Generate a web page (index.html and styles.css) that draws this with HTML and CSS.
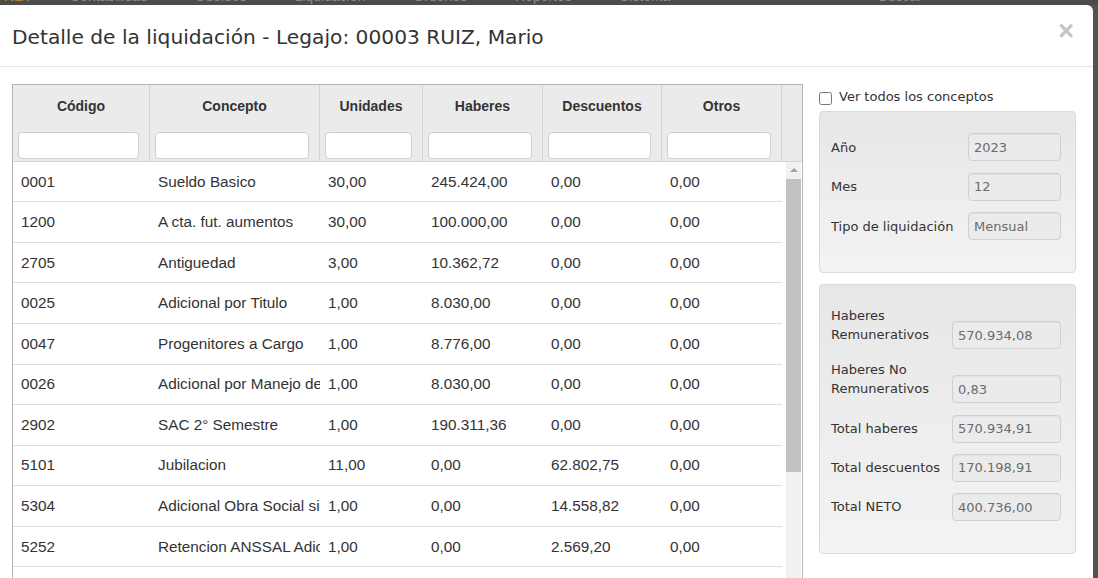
FILE: index.html
```html
<!DOCTYPE html>
<html lang="es">
<head>
    <meta charset="UTF-8">
    <title>Detalle de la liquidación</title>
    <link rel="stylesheet" href="styles.css">
</head>
<body>

<!-- Page behind the modal (only the bottom edge shows) -->
<div class="page-nav">
    <div class="page-nav-inner">
        <span class="brand">NET</span>
        <span>Contabilidad</span>
        <span>Sueldos</span>
        <span>Liquidación</span>
        <span>Ordenes</span>
        <span>Reportes</span>
        <span>Sistema</span>
        <span class="nav-right">Buscar</span>
    </div>
</div>

<div class="modal">
    <div class="modal-header">
        <h4 class="modal-title">Detalle de la liquidación - Legajo: 00003 RUIZ, Mario</h4>
        <button class="close" type="button">&times;</button>
    </div>

    <div class="modal-body">
        <!-- Conceptos grid -->
        <div class="grid">
            <div class="grid-head">
                <div class="hcell c1"><div class="htitle">Código</div><div class="hfilter"><input type="text"></div></div>
                <div class="hcell c2"><div class="htitle">Concepto</div><div class="hfilter"><input type="text"></div></div>
                <div class="hcell c3"><div class="htitle">Unidades</div><div class="hfilter"><input type="text"></div></div>
                <div class="hcell c4"><div class="htitle">Haberes</div><div class="hfilter"><input type="text"></div></div>
                <div class="hcell c5"><div class="htitle">Descuentos</div><div class="hfilter"><input type="text"></div></div>
                <div class="hcell c6"><div class="htitle">Otros</div><div class="hfilter"><input type="text"></div></div>
                <div class="hcell spacer"></div>
            </div>

            <div class="grid-main">
                <div class="rows">
                    <div class="row">
                        <div class="cell c1">0001</div><div class="cell c2">Sueldo Basico</div><div class="cell c3">30,00</div>
                        <div class="cell c4">245.424,00</div><div class="cell c5">0,00</div><div class="cell c6">0,00</div>
                    </div>
                    <div class="row">
                        <div class="cell c1">1200</div><div class="cell c2">A cta. fut. aumentos</div><div class="cell c3">30,00</div>
                        <div class="cell c4">100.000,00</div><div class="cell c5">0,00</div><div class="cell c6">0,00</div>
                    </div>
                    <div class="row">
                        <div class="cell c1">2705</div><div class="cell c2">Antiguedad</div><div class="cell c3">3,00</div>
                        <div class="cell c4">10.362,72</div><div class="cell c5">0,00</div><div class="cell c6">0,00</div>
                    </div>
                    <div class="row">
                        <div class="cell c1">0025</div><div class="cell c2">Adicional por Titulo</div><div class="cell c3">1,00</div>
                        <div class="cell c4">8.030,00</div><div class="cell c5">0,00</div><div class="cell c6">0,00</div>
                    </div>
                    <div class="row">
                        <div class="cell c1">0047</div><div class="cell c2">Progenitores a Cargo</div><div class="cell c3">1,00</div>
                        <div class="cell c4">8.776,00</div><div class="cell c5">0,00</div><div class="cell c6">0,00</div>
                    </div>
                    <div class="row">
                        <div class="cell c1">0026</div><div class="cell c2">Adicional por Manejo de Fondos</div><div class="cell c3">1,00</div>
                        <div class="cell c4">8.030,00</div><div class="cell c5">0,00</div><div class="cell c6">0,00</div>
                    </div>
                    <div class="row">
                        <div class="cell c1">2902</div><div class="cell c2">SAC 2° Semestre</div><div class="cell c3">1,00</div>
                        <div class="cell c4">190.311,36</div><div class="cell c5">0,00</div><div class="cell c6">0,00</div>
                    </div>
                    <div class="row">
                        <div class="cell c1">5101</div><div class="cell c2">Jubilacion</div><div class="cell c3">11,00</div>
                        <div class="cell c4">0,00</div><div class="cell c5">62.802,75</div><div class="cell c6">0,00</div>
                    </div>
                    <div class="row">
                        <div class="cell c1">5304</div><div class="cell c2">Adicional Obra Social sin cargo</div><div class="cell c3">1,00</div>
                        <div class="cell c4">0,00</div><div class="cell c5">14.558,82</div><div class="cell c6">0,00</div>
                    </div>
                    <div class="row">
                        <div class="cell c1">5252</div><div class="cell c2">Retencion ANSSAL Adicional</div><div class="cell c3">1,00</div>
                        <div class="cell c4">0,00</div><div class="cell c5">2.569,20</div><div class="cell c6">0,00</div>
                    </div>
                    <div class="row">
                        <div class="cell c1">5300</div><div class="cell c2">Obra Social</div><div class="cell c3">3,00</div>
                        <div class="cell c4">0,00</div><div class="cell c5">17.128,26</div><div class="cell c6">0,00</div>
                    </div>
                </div>
                <div class="vscroll">
                    <div class="vscroll-track">
                        <div class="vscroll-arrow"></div>
                        <div class="vscroll-thumb"></div>
                    </div>
                </div>
            </div>
        </div>

        <!-- Resumen -->
        <div class="side">
            <label class="check-row">
                <input type="checkbox" class="check">
                <span>Ver todos los conceptos</span>
            </label>

            <div class="panel panel-periodo">
                <div class="field">
                    <span class="field-label">Año</span>
                    <input class="field-input" type="text" value="2023" readonly>
                </div>
                <div class="field">
                    <span class="field-label">Mes</span>
                    <input class="field-input" type="text" value="12" readonly>
                </div>
                <div class="field">
                    <span class="field-label">Tipo de liquidación</span>
                    <input class="field-input" type="text" value="Mensual" readonly>
                </div>
            </div>

            <div class="panel panel-totales">
                <div class="field">
                    <span class="field-label">Haberes Remunerativos</span>
                    <input class="field-input" type="text" value="570.934,08" readonly>
                </div>
                <div class="field">
                    <span class="field-label">Haberes No Remunerativos</span>
                    <input class="field-input" type="text" value="0,83" readonly>
                </div>
                <div class="field">
                    <span class="field-label">Total haberes</span>
                    <input class="field-input" type="text" value="570.934,91" readonly>
                </div>
                <div class="field">
                    <span class="field-label">Total descuentos</span>
                    <input class="field-input" type="text" value="170.198,91" readonly>
                </div>
                <div class="field">
                    <span class="field-label">Total NETO</span>
                    <input class="field-input" type="text" value="400.736,00" readonly>
                </div>
            </div>
        </div>
    </div>
</div>

</body>
</html>
```

FILE: styles.css
```css
/* Base */
html, body {
    height: 100%;
}

body {
    margin: 0;
    overflow: hidden;
    background: #535353;
    font-family: 'DejaVu Sans', Verdana, sans-serif;
    color: #333;
}

/* Page behind the backdrop */
.page-nav {
    height: 5px;
    overflow: hidden;
    background: #4b4b4b;
}

.page-nav-inner {
    display: flex;
    gap: 48px;
    margin-top: -11px;
    padding-left: 4px;
    font-family: 'Liberation Sans', Arial, sans-serif;
    font-size: 14px;
    line-height: 15px;
    color: #8c8c8c;
}

.page-nav-inner .brand {
    color: #b07a3a;
    font-weight: bold;
    margin-right: -10px;
}

.page-nav-inner .nav-right {
    margin-left: 160px;
}

/* Modal */
.modal {
    width: 1093px;
    height: calc(100% - 5px);
    background: #fff;
    border-radius: 0 6px 0 0;
    box-sizing: border-box;
}

.modal-header {
    display: flex;
    align-items: center;
    height: 62px;
    padding: 2px 12px 0 12px;
    box-sizing: border-box;
    border-bottom: 1px solid #e5e5e5;
}

.modal-title {
    margin: 0;
    font-size: 20.2px;
    font-weight: normal;
    color: #333;
}

.close {
    margin-left: auto;
    margin-right: 7px;
    margin-top: -11px;
    padding: 0;
    border: 0;
    background: none;
    font-family: 'Liberation Sans', Arial, sans-serif;
    font-size: 27px;
    font-weight: bold;
    line-height: 1;
    color: #c4c4c4;
    cursor: pointer;
}

.modal-body {
    display: flex;
    gap: 16px;
    padding: 17px 17px 0 12px;
}

/* Grid */
.grid {
    width: 791px;
    flex-shrink: 0;
    border: 1px solid #b5b5b5;
    border-bottom: 0;
    box-sizing: border-box;
    font-family: 'Liberation Sans', Arial, sans-serif;
}

.grid-head {
    display: flex;
    background: #ebebeb;
    border-bottom: 1px solid #d4d4d4;
}

.hcell {
    box-sizing: border-box;
    border-right: 1px solid #d4d4d4;
}

.hcell.spacer {
    border-right: 0;
}

.htitle {
    height: 42px;
    line-height: 42px;
    text-align: center;
    font-size: 14px;
    font-weight: bold;
    color: #333;
}

.hfilter {
    padding: 5px 10px 2px 5px;
}

.hfilter input {
    display: block;
    width: 100%;
    height: 27px;
    box-sizing: border-box;
    border: 1px solid #cfcfcf;
    border-radius: 4px;
    background: #fff;
}

.c1 { width: 137px; }
.c2 { width: 170px; }
.c3 { width: 103px; }
.c4 { width: 120px; }
.c5 { width: 119px; }
.c6 { width: 120px; }
.spacer { width: 20px; }

.grid-main {
    display: flex;
}

.rows {
    width: 769px;
}

.row {
    display: flex;
    height: 40.56px;
    box-sizing: border-box;
    border-bottom: 1px solid #dcdcdc;
    background: #fff;
}

.row:first-child {
    height: 40.4px;
}

.cell {
    box-sizing: border-box;
    padding: 0 8px;
    display: flex;
    align-items: center;
    white-space: nowrap;
    overflow: hidden;
    font-size: 15.3px;
    color: #333;
}

/* Scrollbar */
.vscroll {
    width: 20px;
    padding: 0 1px 0 4px;
    box-sizing: border-box;
    background: #fff;
}

.vscroll-track {
    height: 440px;
    background: #f1f1f1;
}

.vscroll-arrow {
    height: 17px;
    display: flex;
    justify-content: center;
    align-items: center;
}

.vscroll-arrow::before {
    content: "";
    border-left: 4px solid transparent;
    border-right: 4px solid transparent;
    border-bottom: 4px solid #a3a3a3;
    margin-top: -2px;
}

.vscroll-thumb {
    height: 293px;
    background: #c1c1c1;
}

/* Side */
.side {
    width: 257px;
    flex-shrink: 0;
}

.check-row {
    display: flex;
    align-items: center;
    height: 19px;
    margin: 3px 0 5px 0;
    font-size: 13px;
    color: #333;
}

.check {
    width: 13px;
    height: 13px;
    margin: 3px 7px 0 0;
}

.panel {
    border: 1px solid #d9d9d9;
    border-radius: 4px;
    background: linear-gradient(#e7e7e7, #f3f3f3);
    padding: 21px 14px 32px 11px;
}

.panel-totales {
    margin-top: 11px;
}

.field {
    display: flex;
    align-items: center;
    margin-bottom: 11.5px;
}

.field:last-child {
    margin-bottom: 0;
}

.field-label {
    width: 137px;
    flex-shrink: 0;
    font-size: 13px;
    line-height: 19px;
}

.panel-totales .field {
    align-items: flex-end;
    margin-bottom: 11.3px;
}

.panel-totales .field:last-child {
    margin-bottom: 0;
}

.panel-totales .field-label {
    width: 121px;
    padding-bottom: 5px;
}

.field-input {
    width: 100%;
    min-width: 0;
    height: 28px;
    box-sizing: border-box;
    padding: 0 5px;
    border: 1px solid #d0d0d0;
    border-radius: 4px;
    background: #ebebeb;
    box-shadow: inset 0 1px 1px rgba(0, 0, 0, 0.04);
    font-family: 'DejaVu Sans', Verdana, sans-serif;
    font-size: 13px;
    color: #6b6b6b;
}
```
